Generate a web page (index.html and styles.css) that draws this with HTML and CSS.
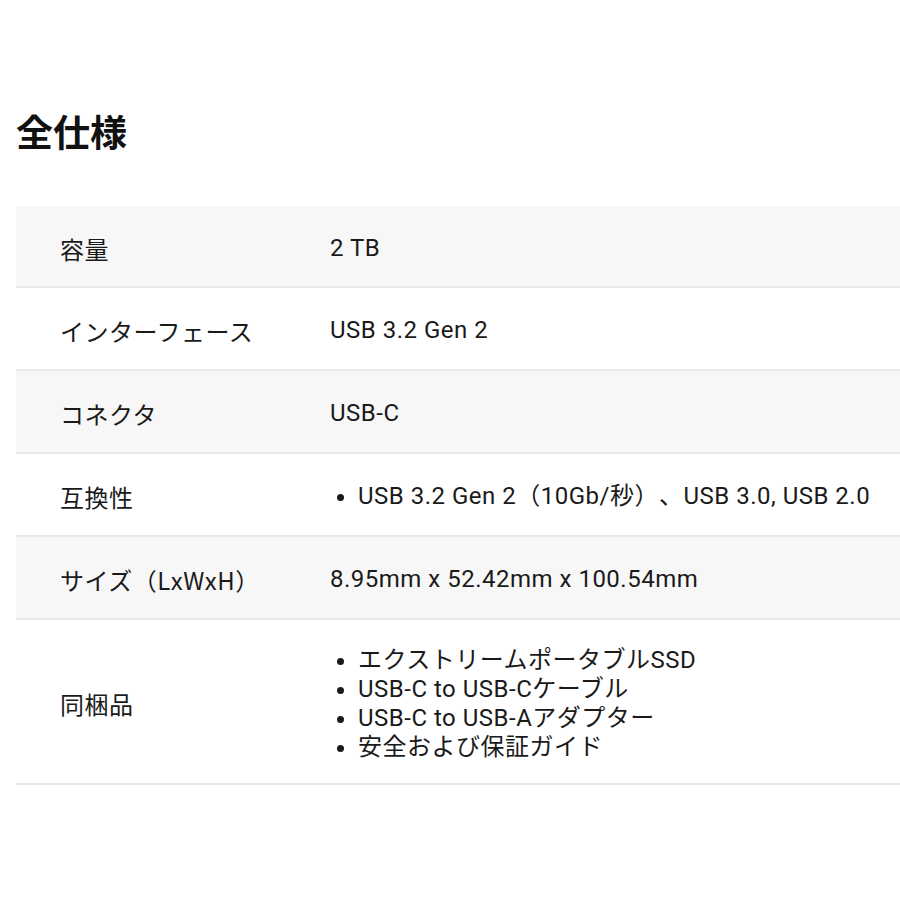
FILE: index.html
```html
<!DOCTYPE html>
<html lang="ja">
<head>
<meta charset="utf-8">
<title>全仕様</title>
<link rel="stylesheet" href="styles.css">
</head>
<body>
<section class="specs">
  <h2 class="specs-title">全仕様</h2>
  <table class="spec-table">
    <tbody>
      <tr class="row row-shaded">
        <th class="label">容量</th>
        <td class="value">2 TB</td>
      </tr>
      <tr class="row">
        <th class="label">インターフェース</th>
        <td class="value">USB 3.2 Gen 2</td>
      </tr>
      <tr class="row row-shaded">
        <th class="label">コネクタ</th>
        <td class="value">USB-C</td>
      </tr>
      <tr class="row">
        <th class="label">互換性</th>
        <td class="value">
          <ul class="bullets">
            <li>USB 3.2 Gen 2（10Gb/秒）、USB 3.0, USB 2.0</li>
          </ul>
        </td>
      </tr>
      <tr class="row row-shaded">
        <th class="label">サイズ（LxWxH）</th>
        <td class="value">8.95mm x 52.42mm x 100.54mm</td>
      </tr>
      <tr class="row row-tall">
        <th class="label">同梱品</th>
        <td class="value">
          <ul class="bullets">
            <li>エクストリームポータブルSSD</li>
            <li>USB-C to USB-Cケーブル</li>
            <li>USB-C to USB-Aアダプター</li>
            <li>安全および保証ガイド</li>
          </ul>
        </td>
      </tr>
    </tbody>
  </table>
</section>
</body>
</html>
```
FILE: styles.css
```css
html, body {
  margin: 0;
  padding: 0;
  background: #ffffff;
  overflow: hidden;
}

body {
  font-family: Roboto, "Noto Sans CJK JP", sans-serif;
  color: #1a1a1a;
}

.specs {
  padding: 104px 0 0 16px;
}

.specs-title {
  margin: 0 0 48px 0;
  font-family: "Noto Sans CJK JP", sans-serif;
  font-size: 37px;
  font-weight: 700;
  line-height: 54px;
  color: #111111;
}

.spec-table {
  width: 884px;
  border-collapse: collapse;
  border-spacing: 0;
  font-size: 24px;
  line-height: 29px;
  letter-spacing: 0.5px;
  text-spacing-trim: space-all;
}

.row {
  border-bottom: 2px solid #e9e9e9;
}

.row-shaded {
  background: #f7f7f7;
}

.label,
.value {
  box-sizing: border-box;
  height: 83px;
  padding: 4px 0 0 0;
  vertical-align: middle;
  text-align: left;
  font-weight: 400;
}

.row:first-child .label,
.row:first-child .value {
  height: 81px;
}

.label {
  width: 314px;
  padding-left: 44px;
  font-family: "Noto Sans CJK JP", Roboto, sans-serif;
}

.row-tall .label,
.row-tall .value {
  height: 165px;
}

.bullets {
  margin: 0;
  padding: 0 0 0 28px;
  list-style: disc;
}
```
